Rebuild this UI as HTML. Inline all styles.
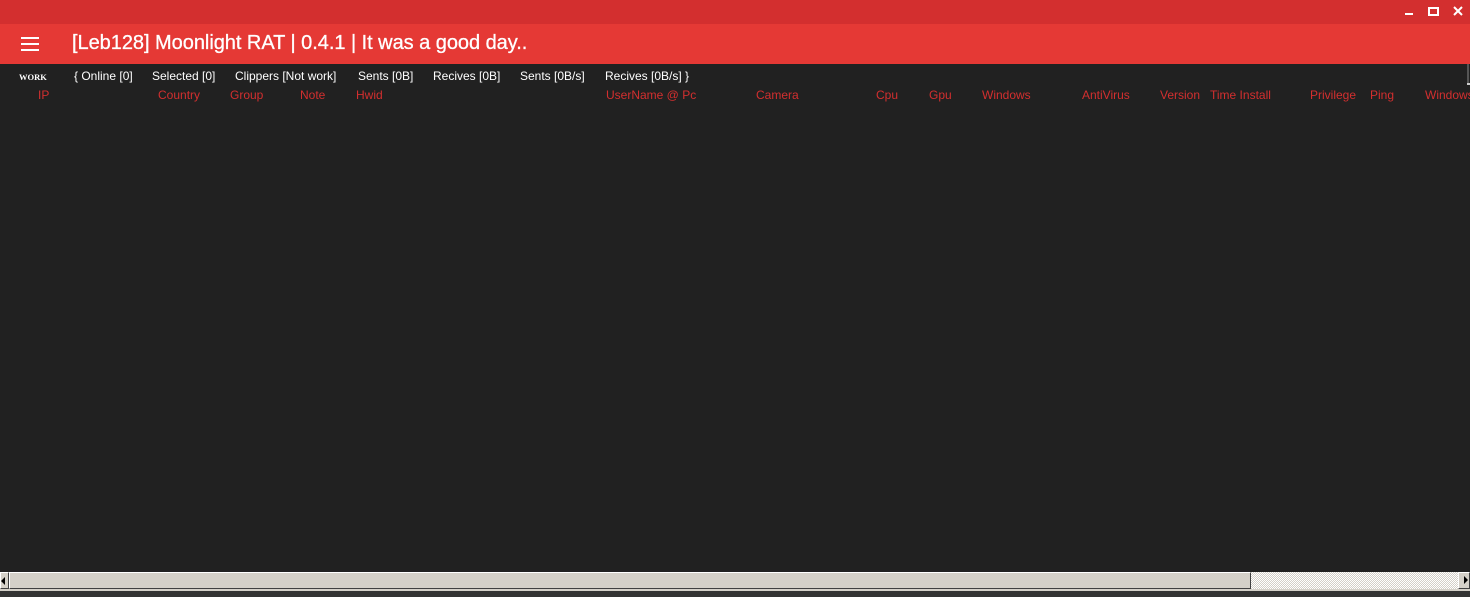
<!DOCTYPE html>
<html><head><meta charset="utf-8"><style>
*{margin:0;padding:0;box-sizing:border-box}
body{width:1470px;height:597px;overflow:hidden;background:#212121;position:relative;font-family:"Liberation Sans",sans-serif}
.t{position:absolute;white-space:nowrap}
#top{position:absolute;left:0;top:0;width:1470px;height:24px;background:#d32f2f}
#hdr{position:absolute;left:0;top:24px;width:1470px;height:40px;background:#e53935}
.w{color:#fff;font-size:12px;top:69px}
.r{color:#d32f2f;font-size:12px;top:88px}
</style></head><body>
<div id="top"></div>
<div id="hdr"></div>
<div style="position:absolute;left:1405px;top:13px;width:8px;height:2px;background:#fff"></div>
<div style="position:absolute;left:1428px;top:7px;width:11px;height:9px;border:2px solid #fff"></div>
<svg style="position:absolute;left:1453px;top:6px" width="10" height="10"><path d="M1 1L9 9M9 1L1 9" stroke="#fff" stroke-width="2"/></svg>
<div style="position:absolute;left:21px;top:37px;width:18px;height:2px;background:#fff;box-shadow:0 6px 0 #fff,0 12px 0 #fff"></div>
<div class="t" style="left:72px;top:32px;color:#fff;font-size:20px;letter-spacing:-0.04px;-webkit-text-stroke:0.3px #fff">[Leb128] Moonlight RAT | 0.4.1 | It was a good day..</div>
<div class="t" style="left:19px;top:72px;color:#fff;font-size:8.5px;font-weight:bold;font-family:'Liberation Serif',serif">WORK</div>
<div class="t w" style="left:74px">{ Online [0]</div>
<div class="t w" style="left:152px">Selected [0]</div>
<div class="t w" style="left:235px">Clippers [Not work]</div>
<div class="t w" style="left:358px">Sents [0B]</div>
<div class="t w" style="left:433px">Recives [0B]</div>
<div class="t w" style="left:520px">Sents [0B/s]</div>
<div class="t w" style="left:605px">Recives [0B/s] }</div>
<div class="t r" style="left:38px">IP</div>
<div class="t r" style="left:158px">Country</div>
<div class="t r" style="left:230px">Group</div>
<div class="t r" style="left:300px">Note</div>
<div class="t r" style="left:356px">Hwid</div>
<div class="t r" style="left:606px">UserName @ Pc</div>
<div class="t r" style="left:756px">Camera</div>
<div class="t r" style="left:876px">Cpu</div>
<div class="t r" style="left:929px">Gpu</div>
<div class="t r" style="left:982px">Windows</div>
<div class="t r" style="left:1082px">AntiVirus</div>
<div class="t r" style="left:1160px">Version</div>
<div class="t r" style="left:1210px">Time Install</div>
<div class="t r" style="left:1310px">Privilege</div>
<div class="t r" style="left:1370px">Ping</div>
<div class="t r" style="left:1425px">Windows</div>
<div style="position:absolute;left:1467px;top:64px;width:2px;height:20px;background:#555"></div>
<div style="position:absolute;left:1467px;top:83px;width:3px;height:2px;background:#ccc"></div>
<div style="position:absolute;left:0;top:572px;width:1470px;height:17px;background:#f0efea;background-image:repeating-conic-gradient(#d4d0c8 0 25%,#fff 0 50%);background-size:2px 2px"></div>
<div style="position:absolute;left:0;top:572px;width:9px;height:17px;background:#d4d0c8;border:1px solid;border-color:#fff #404040 #404040 #fff"></div>
<div style="position:absolute;left:1px;top:577px;width:0;height:0;border-top:4px solid transparent;border-bottom:4px solid transparent;border-right:4px solid #000"></div>
<div style="position:absolute;left:9px;top:572px;width:1242px;height:17px;background:#d4d0c8;border:1px solid;border-color:#fff #404040 #404040 #fff"></div>
<div style="position:absolute;left:1458px;top:572px;width:12px;height:17px;background:#d4d0c8;border:1px solid;border-color:#fff #404040 #404040 #fff"></div>
<div style="position:absolute;left:1464px;top:576px;width:0;height:0;border-top:4px solid transparent;border-bottom:4px solid transparent;border-left:4px solid #000"></div>
<div style="position:absolute;left:0;top:589px;width:1470px;height:2px;background:#d4d0c8"></div>
<div style="position:absolute;left:0;top:591px;width:1470px;height:6px;background:#333"></div>
</body></html>
